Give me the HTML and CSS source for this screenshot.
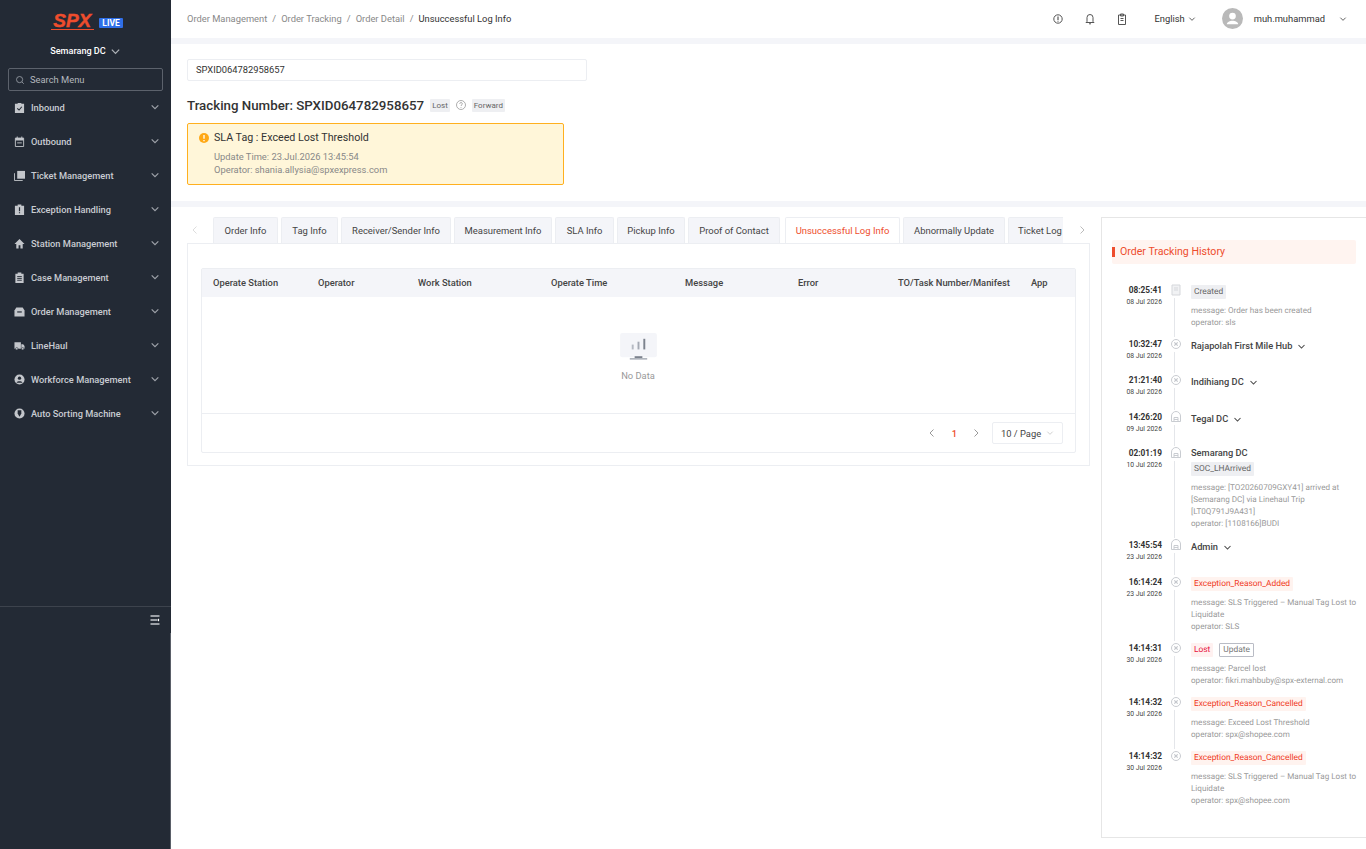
FILE: index.html
```html
<!DOCTYPE html>
<html lang="en">
<head>
    <meta charset="UTF-8">
    <title>Unsuccessful Log Info</title>
    <link rel="stylesheet" href="styles.css">
</head>
<body>

    <svg class="defs" width="0" height="0">
        <symbol id="chev" viewBox="0 0 12 12"><path d="M2 4l4 4 4-4" fill="none" stroke="currentColor" stroke-width="1.4"/></symbol>
        <symbol id="stationIcon" viewBox="0 0 12 12"><path d="M1.500 10.500V5a4.500 4.500 0 0 1 9 0v5.500z M4 10.500V6.500h4v4 M4 8.500h4" fill="none" stroke="#c9ccd1" stroke-width="1"/></symbol>
        <symbol id="crossIcon" viewBox="0 0 12 12"><circle cx="6" cy="6" r="4.500" fill="none" stroke="#c9ccd1" stroke-width="1"/><path d="M4.300 4.300l3.400 3.400M7.700 4.300l-3.400 3.400" stroke="#c4c7cc" stroke-width="1.200"/></symbol>
    </svg>

    <!-- Menu lateral -->
    <aside class="sidebar">
        <div class="logo">
            <span class="logo-spx">SPX</span>
            <span class="logo-live">LIVE</span>
        </div>
        <div class="station">Semarang DC <svg class="station-chev"><use href="#chev"/></svg></div>
        <div class="menu-search">
            <svg class="search-icon" viewBox="0 0 12 12"><circle cx="5.500" cy="5.500" r="3.700" fill="none" stroke="#9aa0a8"/><path d="M8.300 8.300l2.200 2.200" stroke="#9aa0a8"/></svg>
            Search Menu
        </div>
        <ul class="menu">
            <li class="menu-item">
                <svg viewBox="0 0 12 12"><path d="M1 2h3V1h4v1h3v10H1z" fill="#c3c6cb"/><path d="M3.500 7l2 1.700 3-3.500" fill="none" stroke="#232a35" stroke-width="1.100"/></svg>
                <span>Inbound</span><svg class="chev"><use href="#chev"/></svg>
            </li>
            <li class="menu-item">
                <svg viewBox="0 0 12 12"><path d="M1.500 2.500h9v9h-9z" fill="none" stroke="#c3c6cb"/><path d="M1.500 2h9v3h-9zM3 .5h1v2H3zM8 .5h1v2H8z" fill="#c3c6cb"/><path d="M3.500 7.500h5" stroke="#c3c6cb"/></svg>
                <span>Outbound</span><svg class="chev"><use href="#chev"/></svg>
            </li>
            <li class="menu-item">
                <svg viewBox="0 0 12 12"><path d="M3.500 1h8.500v8.500H3.500z" fill="#c3c6cb"/><path d="M.5 3.500v8h9" fill="none" stroke="#c3c6cb"/></svg>
                <span>Ticket Management</span><svg class="chev"><use href="#chev"/></svg>
            </li>
            <li class="menu-item">
                <svg viewBox="0 0 12 12"><path d="M1 2h3V.5h4V2h3v10H1z" fill="#c3c6cb"/><path d="M6 3.500v4.500M6 9v1.200" stroke="#232a35" stroke-width="1.300"/></svg>
                <span>Exception Handling</span><svg class="chev"><use href="#chev"/></svg>
            </li>
            <li class="menu-item">
                <svg viewBox="0 0 12 12"><path d="M6 1L.5 6.500H2.500V11.500H5V8h2v3.500h2.500V6.500h2z" fill="#c3c6cb"/></svg>
                <span>Station Management</span><svg class="chev"><use href="#chev"/></svg>
            </li>
            <li class="menu-item">
                <svg viewBox="0 0 12 12"><path d="M1.500 2H4V.5h4V2h2.500v10h-9z" fill="#c3c6cb"/><path d="M3.500 5h5M3.500 7h5M3.500 9h5" stroke="#232a35"/></svg>
                <span>Case Management</span><svg class="chev"><use href="#chev"/></svg>
            </li>
            <li class="menu-item">
                <svg viewBox="0 0 12 12"><path d="M2.500 1.500h7L11.500 5v6.500H.5V5z" fill="#c3c6cb"/><path d="M3.500 6.500h5" stroke="#232a35" stroke-width="1.300"/></svg>
                <span>Order Management</span><svg class="chev"><use href="#chev"/></svg>
            </li>
            <li class="menu-item">
                <svg viewBox="0 0 12 12"><path d="M.5 2.500h7v7h-7zM8 4.500h2l1.500 2v3H8z" fill="#c3c6cb"/><circle cx="3" cy="9.500" r="1.300" fill="#c3c6cb" stroke="#232a35" stroke-width=".6"/><circle cx="9.500" cy="9.500" r="1.300" fill="#c3c6cb" stroke="#232a35" stroke-width=".6"/></svg>
                <span>LineHaul</span><svg class="chev"><use href="#chev"/></svg>
            </li>
            <li class="menu-item">
                <svg viewBox="0 0 12 12"><circle cx="6" cy="6" r="5.500" fill="#c3c6cb"/><circle cx="6" cy="4.500" r="1.800" fill="#232a35"/><path d="M2.800 9.500C3.500 7.500 8.500 7.500 9.200 9.500z" fill="#232a35"/></svg>
                <span>Workforce Management</span><svg class="chev"><use href="#chev"/></svg>
            </li>
            <li class="menu-item">
                <svg viewBox="0 0 12 12"><circle cx="6" cy="6" r="5.500" fill="#c3c6cb"/><path d="M4 2.500h4v3.500L6 9.500 4 6z" fill="#232a35"/></svg>
                <span>Auto Sorting Machine</span><svg class="chev"><use href="#chev"/></svg>
            </li>
        </ul>
        <div class="sidebar-foot">
            <svg viewBox="0 0 10 10"><path d="M.5 1h9M.5 5h7M.5 9h9" stroke="#c3c6cb" stroke-width="1.300"/><path d="M8.500 3.800v2.400" stroke="#fff" stroke-width="1.200"/></svg>
        </div>
    </aside>

    <div class="main">
        <!-- Cabecalho -->
        <header class="topbar">
            <nav class="crumbs">
                <span>Order Management</span><i>/</i>
                <span>Order Tracking</span><i>/</i>
                <span>Order Detail</span><i>/</i>
                <span class="crumb-now">Unsuccessful Log Info</span>
            </nav>
            <div class="top-right">
                <svg class="top-icon" viewBox="0 0 12 12"><circle cx="6" cy="6" r="4.200" fill="none" stroke="#555"/><path d="M6 3.500v3.700" stroke="#555" stroke-width="1.200"/><circle cx="6" cy="8.500" r=".5" fill="#555"/></svg>
                <svg class="top-icon" viewBox="0 0 12 12"><path d="M3 8.500V4.500a3 3 0 0 1 6 0v4l1 1H2zM5 10.800h2" fill="none" stroke="#555"/></svg>
                <svg class="top-icon top-icon-last" viewBox="0 0 12 12"><path d="M2.500 2h7v9.500h-7zM4.500 1h3v2h-3zM4.500 5.500h3M4.500 7.500h3" fill="none" stroke="#555"/></svg>
                <div class="lang">English <svg class="small-chev"><use href="#chev"/></svg></div>
                <div class="avatar"><svg viewBox="0 0 22 22"><circle cx="11" cy="8.500" r="3.500" fill="#fff"/><path d="M5 17c.5-5 11.500-5 12 0z" fill="#fff"/></svg></div>
                <div class="user">muh.muhammad</div>
                <svg class="small-chev user-chev"><use href="#chev"/></svg>
            </div>
        </header>

        <!-- Busca e numero de rastreio -->
        <section class="summary">
            <div class="track-input">SPXID064782958657</div>
            <div class="track-title">
                <h2>Tracking Number: SPXID064782958657</h2>
                <span class="chip">Lost</span>
                <svg class="help" viewBox="0 0 12 12"><circle cx="6" cy="6" r="4.500" fill="none" stroke="#999" stroke-width=".8"/><path d="M4.700 4.800c0-1.700 2.700-1.700 2.700 0 0 1-1.400 1-1.400 2.200M6 8v.8" fill="none" stroke="#999" stroke-width=".8"/></svg>
                <span class="chip">Forward</span>
            </div>
            <div class="sla-box">
                <div class="sla-title">
                    <svg viewBox="0 0 12 12"><circle cx="6" cy="6" r="5" fill="#ffa815"/><path d="M6 3v3.800M6 8v1.200" stroke="#fff" stroke-width="1.300"/></svg>
                    SLA Tag : Exceed Lost Threshold
                </div>
                <div class="sla-text">Update Time: 23.Jul.2026 13:45:54</div>
                <div class="sla-text">Operator: shania.allysia@spxexpress.com</div>
            </div>
        </section>

        <section class="detail">
            <div class="detail-left">
                <div class="tabs-row">
                    <div class="tab-arrow"><svg viewBox="0 0 10 10"><path d="M6.500 1.500L3 5l3.500 3.500" fill="none" stroke="#ddd"/></svg></div>
                    <div class="tabs">
                        <div class="tab w-order">Order Info</div>
                        <div class="tab w-tag">Tag Info</div>
                        <div class="tab w-recv">Receiver/Sender Info</div>
                        <div class="tab w-meas">Measurement Info</div>
                        <div class="tab w-sla">SLA Info</div>
                        <div class="tab w-pick">Pickup Info</div>
                        <div class="tab w-proof">Proof of Contact</div>
                        <div class="tab tab-ativa w-fail">Unsuccessful Log Info</div>
                        <div class="tab w-abn">Abnormally Update</div>
                        <div class="tab w-tick">Ticket Log</div>
                    </div>
                    <div class="tab-arrow tab-arrow-next"><svg viewBox="0 0 10 10"><path d="M3.500 1.500L7 5 3.500 8.500" fill="none" stroke="#bbb"/></svg></div>
                </div>
                <div class="tab-card">
                    <div class="log-table">
                        <div class="log-head">
                            <span>Operate Station</span>
                            <span>Operator</span>
                            <span>Work Station</span>
                            <span>Operate Time</span>
                            <span>Message</span>
                            <span>Error</span>
                            <span>TO/Task Number/Manifest</span>
                            <span>App</span>
                        </div>
                        <div class="log-empty">
                            <svg viewBox="0 0 38 30" class="empty-icon">
                                <rect x="0" y="0" width="38" height="25" rx="2" fill="#f4f5f9"/>
                                <rect x="12" y="12" width="2" height="5" fill="#b5bac3"/>
                                <rect x="18" y="9" width="2" height="8" fill="#a5aab4"/>
                                <rect x="24" y="6" width="2" height="11" fill="#7d838e"/>
                                <rect x="15" y="24" width="8" height="2" fill="#7d838e"/>
                                <rect x="10" y="26" width="18" height="1.500" fill="#a5aab4"/>
                            </svg>
                            <div>No Data</div>
                        </div>
                        <div class="log-foot">
                            <svg class="page-arrow" viewBox="0 0 10 10"><path d="M6.500 1.500L3 5l3.500 3.500" fill="none" stroke="#999"/></svg>
                            <span class="page-num">1</span>
                            <svg class="page-arrow" viewBox="0 0 10 10"><path d="M3.500 1.500L7 5 3.500 8.500" fill="none" stroke="#999"/></svg>
                            <div class="page-size">10 / Page <svg class="small-chev size-chev"><use href="#chev"/></svg></div>
                        </div>
                    </div>
                </div>
            </div>

            <!-- Historico -->
            <aside class="history">
                <div class="history-title">Order Tracking History</div>
                <div class="timeline">
                    <div class="step">
                        <div class="step-time"><b>08:25:41</b><small>08 Jul 2026</small></div>
                        <div class="step-mark">
                            <svg viewBox="0 0 12 12"><path d="M2 1h8v10H2z" fill="#f1f2f4" stroke="#d5d7db"/><path d="M4 4h4M4 6h4" stroke="#d5d7db"/></svg>
                        </div>
                        <div class="step-body">
                            <span class="tag">Created</span>
                            <p class="msg">message: Order has been created<br>operator: sls</p>
                        </div>
                    </div>
                    <div class="step">
                        <div class="step-time"><b>10:32:47</b><small>08 Jul 2026</small></div>
                        <div class="step-mark"><svg><use href="#crossIcon"/></svg></div>
                        <div class="step-body"><div class="place">Rajapolah First Mile Hub <svg class="place-chev"><use href="#chev"/></svg></div></div>
                    </div>
                    <div class="step">
                        <div class="step-time"><b>21:21:40</b><small>08 Jul 2026</small></div>
                        <div class="step-mark"><svg><use href="#crossIcon"/></svg></div>
                        <div class="step-body"><div class="place">Indihiang DC <svg class="place-chev"><use href="#chev"/></svg></div></div>
                    </div>
                    <div class="step">
                        <div class="step-time"><b>14:26:20</b><small>09 Jul 2026</small></div>
                        <div class="step-mark"><svg><use href="#stationIcon"/></svg></div>
                        <div class="step-body"><div class="place">Tegal DC <svg class="place-chev"><use href="#chev"/></svg></div></div>
                    </div>
                    <div class="step">
                        <div class="step-time"><b>02:01:19</b><small>10 Jul 2026</small></div>
                        <div class="step-mark"><svg><use href="#stationIcon"/></svg></div>
                        <div class="step-body">
                            <div class="place place-open">Semarang DC</div>
                            <span class="tag">SOC_LHArrived</span>
                            <p class="msg">message: [TO20260709GXY41] arrived at<br>[Semarang DC] via Linehaul Trip<br>[LT0Q791J9A431]<br>operator: [1108166]BUDI</p>
                        </div>
                    </div>
                    <div class="step">
                        <div class="step-time"><b>13:45:54</b><small>23 Jul 2026</small></div>
                        <div class="step-mark"><svg><use href="#stationIcon"/></svg></div>
                        <div class="step-body"><div class="place">Admin <svg class="place-chev"><use href="#chev"/></svg></div></div>
                    </div>
                    <div class="step">
                        <div class="step-time"><b>16:14:24</b><small>23 Jul 2026</small></div>
                        <div class="step-mark"><svg><use href="#crossIcon"/></svg></div>
                        <div class="step-body">
                            <span class="tag tag-red">Exception_Reason_Added</span>
                            <p class="msg">message: SLS Triggered &#8211; Manual Tag Lost to<br>Liquidate<br>operator: SLS</p>
                        </div>
                    </div>
                    <div class="step">
                        <div class="step-time"><b>14:14:31</b><small>30 Jul 2026</small></div>
                        <div class="step-mark"><svg><use href="#crossIcon"/></svg></div>
                        <div class="step-body">
                            <span class="tag tag-lost">Lost</span><span class="tag tag-line">Update</span>
                            <p class="msg">message: Parcel lost<br>operator: fikri.mahbuby@spx-external.com</p>
                        </div>
                    </div>
                    <div class="step">
                        <div class="step-time"><b>14:14:32</b><small>30 Jul 2026</small></div>
                        <div class="step-mark"><svg><use href="#crossIcon"/></svg></div>
                        <div class="step-body">
                            <span class="tag tag-red">Exception_Reason_Cancelled</span>
                            <p class="msg">message: Exceed Lost Threshold<br>operator: spx@shopee.com</p>
                        </div>
                    </div>
                    <div class="step step-last">
                        <div class="step-time"><b>14:14:32</b><small>30 Jul 2026</small></div>
                        <div class="step-mark"><svg><use href="#crossIcon"/></svg></div>
                        <div class="step-body">
                            <span class="tag tag-red">Exception_Reason_Cancelled</span>
                            <p class="msg">message: SLS Triggered &#8211; Manual Tag Lost to<br>Liquidate<br>operator: spx@shopee.com</p>
                        </div>
                    </div>
                </div>
            </aside>
        </section>
    </div>

</body>
</html>
```

FILE: styles.css
```css
* {
    box-sizing: border-box;
}

html, body {
    margin: 0;
    height: 849px;
    overflow: hidden;
}

body {
    display: flex;
    background-color: #fff;
    color: #333;
    font-family: Roboto, "Liberation Sans", sans-serif;
    font-size: 9.350px;
}

.defs {
    position: absolute;
}

/* Menu lateral */
.sidebar {
    width: 171px;
    height: 849px;
    flex-shrink: 0;
    display: flex;
    flex-direction: column;
    position: relative;
    background-color: #232a35;
    color: #c9ccd2;
}

/* Resto da barra de rolagem na borda */
.sidebar::after {
    content: "";
    position: absolute;
    right: 0;
    top: 633px;
    bottom: 0;
    width: 1px;
    background-color: #5a5f68;
}

.logo {
    height: 33px;
    padding: 11px 0 0 3px;
    display: flex;
    justify-content: center;
    align-items: center;
    gap: 5px;
}

.logo-spx {
    color: #ee4d2d;
    font-family: "Liberation Sans", sans-serif;
    font-size: 19px;
    font-style: italic;
    font-weight: bold;
    -webkit-text-stroke: 0.4px #ee4d2d;
    line-height: 17px;
    height: 18px;
    padding: 0 3px 0 2px;
    border-bottom: 1px solid #ee4d2d;
    margin-top: -2px;
}

.logo-live {
    background-color: #2f6fe8;
    color: #fff;
    font-size: 8.500px;
    font-weight: 700;
    padding: 0 3px;
    line-height: 10px;
    border-radius: 1px;
    margin-top: 1px;
}

.station {
    margin-top: 11px;
    height: 14px;
    display: flex;
    justify-content: center;
    align-items: center;
    gap: 4px;
    color: #fff;
    font-size: 9.100px;
    font-weight: 500;
}

.station-chev {
    width: 11px;
    height: 11px;
    color: #aeb2b8;
}

.menu-search {
    margin: 10px 8px 0;
    height: 23px;
    padding-left: 6px;
    display: flex;
    align-items: center;
    gap: 5px;
    border: 1px solid #5c626c;
    border-radius: 2px;
    color: #b4b8be;
}

.search-icon {
    width: 10px;
    height: 10px;
}

.menu {
    list-style: none;
    margin: -1px 0 0;
    padding: 0;
    flex: 1;
}

.menu-item {
    height: 34px;
    padding: 0 11px 0 14px;
    display: flex;
    align-items: center;
    font-size: 9.250px;
    font-weight: 500;
}

.menu-item > svg:first-child {
    width: 11px;
    height: 11px;
    margin-right: 6px;
    flex-shrink: 0;
}

.menu-item span {
    flex: 1;
}

.chev {
    width: 10px;
    height: 10px;
    color: #9ea2a9;
}

.sidebar-foot {
    height: 243px;
    border-top: 1px solid #3d434d;
    padding: 8px 11px 0 0;
    display: flex;
    justify-content: flex-end;
    align-items: flex-start;
}

.sidebar-foot svg {
    width: 10px;
    height: 10px;
}

/* Area principal */
.main {
    flex: 1;
    min-width: 0;
    display: flex;
    flex-direction: column;
}

.topbar {
    height: 44px;
    padding: 0 16px 1px;
    display: flex;
    align-items: center;
    justify-content: space-between;
    border-bottom: 6px solid #f4f5f9;
    color: #333;
}

.crumbs {
    display: flex;
    gap: 5px;
    color: #888;
}

.crumbs i {
    font-style: normal;
}

.crumb-now {
    color: #333;
}

.top-right {
    display: flex;
    align-items: center;
}

.top-icon {
    width: 12px;
    height: 12px;
    margin-right: 20px;
}

.top-icon-last {
    margin-right: 26px;
}

.lang {
    margin: 0 26px 0 0;
    display: flex;
    align-items: center;
    gap: 3px;
}

.small-chev {
    width: 8px;
    height: 8px;
    color: #555;
}

.avatar {
    width: 21px;
    height: 21px;
    border-radius: 50%;
    background-color: #b9b9b9;
    margin-right: 11px;
}

.avatar svg {
    display: block;
    width: 21px;
    height: 21px;
}

.user {
    margin-right: 14px;
}

.user-chev {
    margin-right: 3px;
}

.summary {
    height: 163px;
    padding: 15px 16px 0;
    border-bottom: 6px solid #f4f5f9;
}

.track-input {
    width: 400px;
    height: 22px;
    padding: 0 0 1px 8px;
    display: flex;
    align-items: center;
    border: 1px solid #eceef2;
    border-radius: 2px;
    color: #333;
}

.track-title {
    margin-top: 16px;
    height: 16px;
    display: flex;
    align-items: center;
}

.track-title h2 {
    margin: 0 6px 0 0;
    font-size: 13.300px;
    font-weight: 500;
    color: #333;
}

.chip {
    background-color: #eeeff2;
    color: #666;
    font-size: 8px;
    padding: 0 2px;
    line-height: 13px;
    border-radius: 1px;
}

.help {
    width: 12px;
    height: 12px;
    margin: 0 5px;
}

.sla-box {
    margin-top: 10px;
    width: 377px;
    height: 62px;
    padding: 7px 12px 0 26px;
    position: relative;
    background-color: #fff6d9;
    border: 1px solid #ffb01f;
    border-radius: 2px;
    color: #888;
    line-height: 13px;
}

.sla-title {
    color: #333;
    font-size: 10.700px;
    line-height: 14px;
    margin-bottom: 5px;
}

.sla-title svg {
    position: absolute;
    left: 10px;
    top: 8px;
    width: 12px;
    height: 12px;
}

/* Abas e tabela */
.detail {
    flex: 1;
    min-height: 0;
    padding: 10px 0 11px 16px;
    display: flex;
    gap: 11px;
}

.detail-left {
    width: 903px;
    flex-shrink: 0;
}

.tabs-row {
    height: 26px;
    display: flex;
    align-items: center;
}

.tab-arrow {
    width: 26px;
    padding-left: 3px;
    display: flex;
    align-items: center;
}

.tab-arrow svg {
    width: 10px;
    height: 10px;
}

.tab-arrow-next {
    padding-left: 14px;
}

.tabs {
    width: 850px;
    height: 26px;
    display: flex;
    gap: 3px;
    overflow: hidden;
}

.tab {
    flex-shrink: 0;
    display: flex;
    align-items: center;
    justify-content: center;
    background-color: #f4f5f9;
    border: 1px solid #eceef2;
    border-bottom: none;
    border-radius: 2px 2px 0 0;
    color: #444;
    font-size: 9.450px;
}

.w-order { width: 65px; }
.w-tag { width: 57px; }
.w-recv { width: 110px; }
.w-meas { width: 98px; }
.w-sla { width: 59px; }
.w-pick { width: 68px; }
.w-proof { width: 92px; }
.w-fail { width: 115px; margin-left: 2px; }
.w-abn { width: 102px; }
.w-tick { width: 64px; }

.tab-ativa {
    background-color: #fff;
    color: #ee4d2d;
}

.tab-card {
    height: 223px;
    padding: 24px 13px 0;
    border: 1px solid #eceef2;
}

.log-table {
    height: 185px;
    border: 1px solid #eceef2;
    border-radius: 2px;
}

.log-head {
    height: 28px;
    padding: 0 0 1px 11px;
    display: grid;
    grid-template-columns: 105px 100px 133px 134px 113px 100px 133px 45px;
    align-items: center;
    background-color: #f4f5f9;
    color: #444;
    font-weight: 500;
}

.log-empty {
    height: 117px;
    padding: 36px 1px 0 0;
    display: flex;
    flex-direction: column;
    align-items: center;
    color: #999;
    border-bottom: 1px solid #eceef2;
}

.empty-icon {
    width: 37px;
    height: 29px;
    margin-bottom: 8px;
}

.log-foot {
    height: 38px;
    padding-right: 12px;
    display: flex;
    align-items: center;
    justify-content: flex-end;
}

.page-arrow {
    width: 10px;
    height: 10px;
}

.page-num {
    margin: 0 14px 0 15px;
    color: #ee4d2d;
    font-weight: 500;
}

.page-size {
    margin-left: 11px;
    width: 71px;
    height: 22px;
    padding: 0 8px;
    display: flex;
    align-items: center;
    justify-content: space-between;
    border: 1px solid #eceef2;
    border-radius: 2px;
    color: #444;
}

.size-chev {
    color: #ccc;
}

/* Historico do pedido */
.history {
    flex: 1;
    min-width: 0;
    padding: 22px 10px 0 10px;
    border: 1px solid #e6e6e6;
    border-right: none;
}

.history-title {
    height: 24px;
    padding: 0 0 1px 8px;
    display: flex;
    align-items: center;
    position: relative;
    background-color: #fff4f0;
    border-radius: 2px;
    color: #ee4d2d;
    font-size: 10.600px;
}

.history-title::before {
    content: "";
    position: absolute;
    left: 0;
    top: 7px;
    width: 3px;
    height: 10px;
    background-color: #ee4d2d;
}

.timeline {
    margin-top: 19px;
}

.step {
    min-height: 36.400px;
    display: flex;
    padding-bottom: 9px;
    position: relative;
}

.step-time {
    width: 50px;
    text-align: right;
    color: #333;
    flex-shrink: 0;
}

.step-time b {
    display: block;
    font-size: 8.300px;
    font-weight: 700;
    line-height: 14px;
}

.step-time small {
    display: block;
    font-size: 6.800px;
    line-height: 9px;
    margin-top: 1px;
    color: #444;
}

.step-mark {
    width: 26px;
    flex-shrink: 0;
    display: flex;
    justify-content: center;
    padding-left: 1px;
}

.step-mark svg {
    width: 12px;
    height: 12px;
    margin-top: 1px;
    background-color: #fff;
}

.step::after {
    content: "";
    position: absolute;
    left: 62px;
    top: 15px;
    bottom: 0;
    width: 1px;
    background-color: #e4e6ea;
}

.step-last::after {
    display: none;
}

.step-body {
    flex: 1;
    min-width: 0;
    margin-left: 3px;
}

.place {
    height: 18px;
    margin-top: 2px;
    line-height: 14px;
    font-size: 9.270px;
    font-weight: 500;
    color: #444;
    display: flex;
    align-items: flex-start;
    gap: 5px;
}

.place-open {
    height: 14px;
    margin-top: 0;
}

.place-chev {
    width: 9px;
    height: 9px;
    margin-top: 3px;
    color: #444;
}

.tag {
    display: inline-block;
    vertical-align: top;
    height: 14px;
    margin-top: 2px;
    padding: 0 3px;
    background-color: #eeeff2;
    color: #666;
    font-size: 8.400px;
    line-height: 14px;
    border-radius: 1px;
    text-rendering: geometricPrecision;
}

.tag-red {
    background-color: #fff3ef;
    color: #f03a24;
}

.tag-lost {
    background-color: #fff1f0;
    color: #e8103c;
    margin-right: 6px;
}

.tag-line {
    background-color: #fff;
    border: 1px solid #b9bcc5;
    color: #777;
    line-height: 12px;
}

.msg {
    margin: 5px 0 0;
    color: #999;
    font-size: 8.100px;
    line-height: 12px;
    white-space: nowrap;
    text-rendering: geometricPrecision;
}
```
